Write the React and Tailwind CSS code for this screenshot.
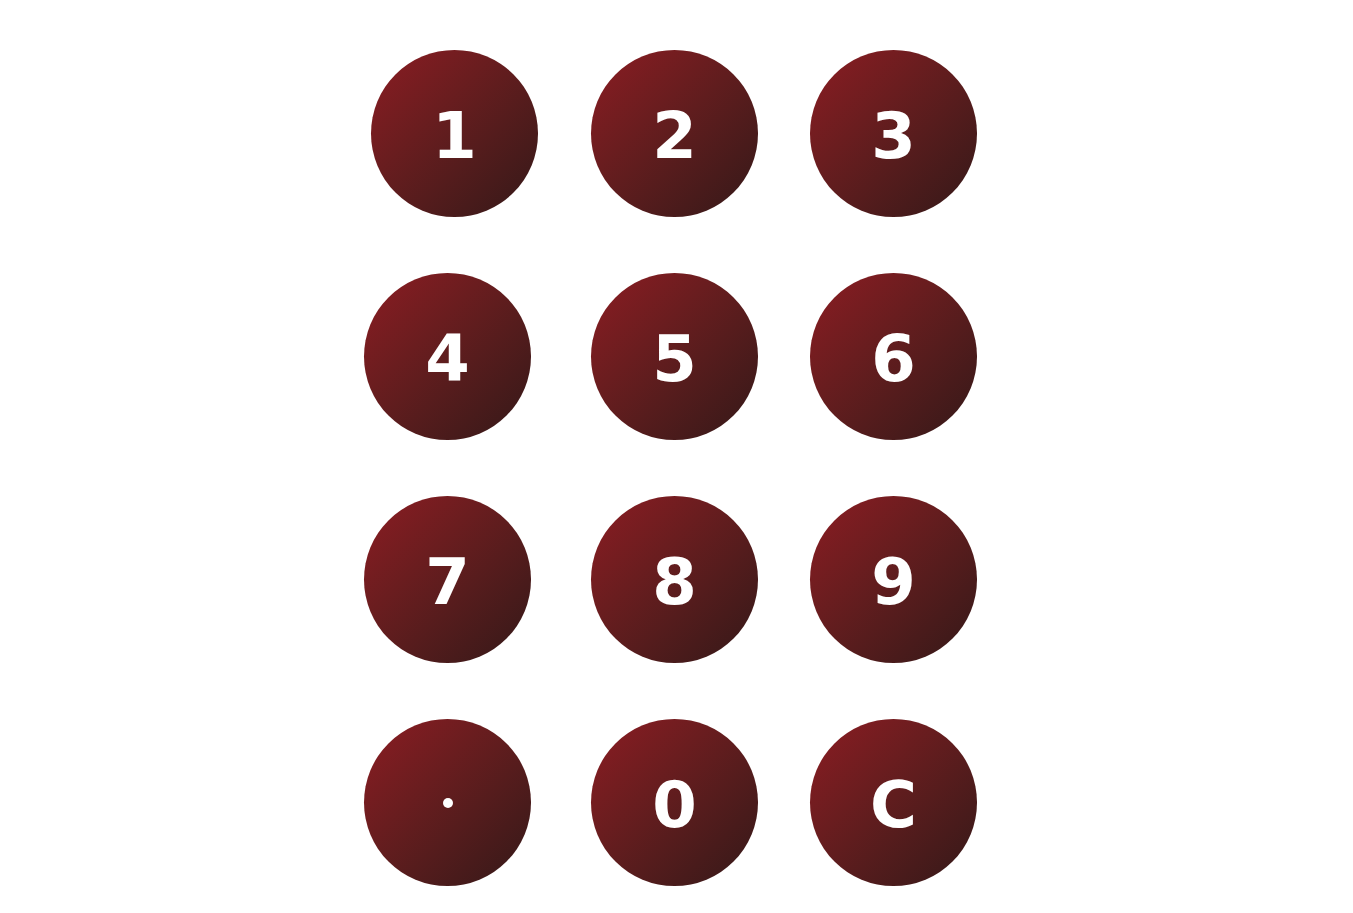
const rows = [
  { keys: ['1', '2', '3'], lead: 'ml-[371px]', gap: 'gap-x-[53px]' },
  { keys: ['4', '5', '6'], lead: 'ml-[364px]', gap: 'gap-x-[60px]' },
  { keys: ['7', '8', '9'], lead: 'ml-[364px]', gap: 'gap-x-[60px]' },
  { keys: ['.', '0', 'C'], lead: 'ml-[364px]', gap: 'gap-x-[60px]' },
];

const Key = ({ label }) => (
  <button
    type="button"
    className="w-[167px] h-[167px] rounded-full bg-gradient-to-br from-[#8c1b22] to-[#341818] text-white flex items-center justify-center pt-[5px] text-[64px] font-bold leading-none font-['DejaVu_Sans',sans-serif]"
  >
    {label === '.' ? <span className="block w-[10px] h-[10px] -mt-[5px] rounded-full bg-white" /> : label}
  </button>
);

const App = () => {
  return (
    <div className="w-[1353px] h-[913px] bg-white pt-[50px] flex flex-col gap-y-[56px] overflow-hidden">
      {rows.map((row, i) => (
        <div key={i} className={`flex ${row.lead} ${row.gap}`}>
          {row.keys.map((k, j) => (
            <div key={k} className={j === 2 ? (i === 0 ? 'ml-[-1px]' : 'ml-[-8px]') : ''}>
              <Key label={k} />
            </div>
          ))}
        </div>
      ))}
    </div>
  );
};

export default App;
